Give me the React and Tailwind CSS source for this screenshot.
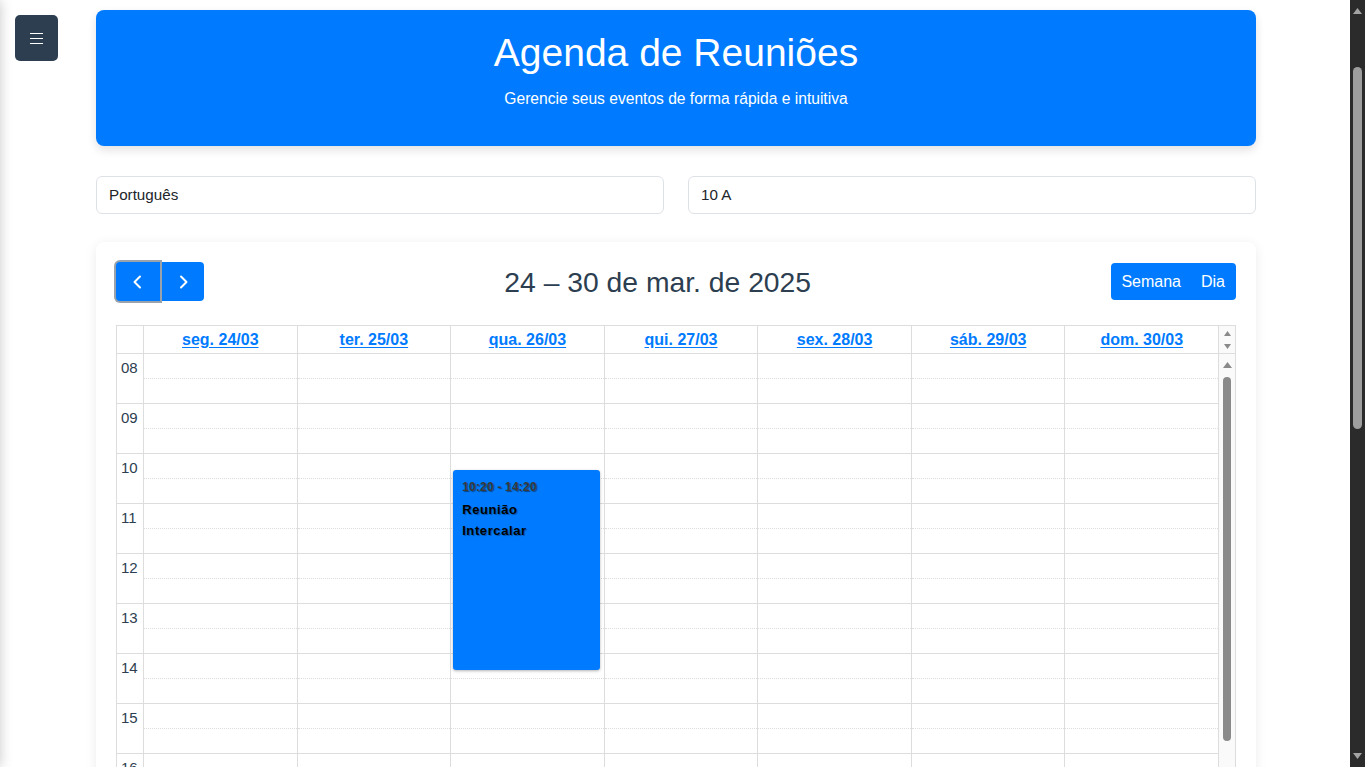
import React from "react";

const days = ["seg. 24/03", "ter. 25/03", "qua. 26/03", "qui. 27/03", "sex. 28/03", "sáb. 29/03", "dom. 30/03"];
const hours = ["08", "09", "10", "11", "12", "13", "14", "15", "16", "17", "18", "19"];

function Slots() {
  return (
    <>
      {hours.map((h) => (
        <div key={h}>
          <div className="h-[25px] border-b border-dotted border-[#dddddd]" />
          <div className="h-[25px] border-b border-[#dddddd]" />
        </div>
      ))}
    </>
  );
}

export default function App() {
  return (
    <div className="relative flex h-[767px] overflow-hidden bg-white font-['Liberation_Sans',Arial,sans-serif] text-[#212529]">
      {/* off-canvas sidebar shadow */}
      <div className="absolute left-[-300px] top-0 h-full w-[300px] bg-white shadow-[0_0_12px_rgba(0,0,0,0.22)]" />
      {/* hamburger */}
      <button className="absolute left-[15px] top-[15px] z-10 flex h-[46px] w-[43px] flex-col items-center justify-center gap-[4px] rounded-[5px] bg-[#2c3e50]">
        <span className="block h-[1px] w-[13px] bg-white" />
        <span className="block h-[1px] w-[13px] bg-white" />
        <span className="block h-[1px] w-[13px] bg-white" />
      </button>

      <main className="flex-1 overflow-hidden pl-[2px]">
        <div className="mx-auto w-[1160px] pt-[10px]">
          {/* header */}
          <header className="flex h-[136px] flex-col items-center rounded-[8px] bg-[#007bff] pt-[19px] text-white shadow-[0_4px_10px_rgba(0,0,0,0.12)]">
            <h1 className="text-[39px] leading-[47px]">Agenda de Reuniões</h1>
            <p className="mt-[13px] text-[15.6px] leading-[20px]">Gerencie seus eventos de forma rápida e intuitiva</p>
          </header>

          {/* inputs */}
          <div className="mt-[30px] flex gap-[24px]">
            <div className="flex h-[38px] flex-1 items-center rounded-[6px] border border-[#dee2e6] px-[12px] text-[15.2px] text-[#212529]">Português</div>
            <div className="flex h-[38px] flex-1 items-center rounded-[6px] border border-[#dee2e6] px-[12px] text-[15.2px] text-[#212529]">10 A</div>
          </div>

          {/* calendar card */}
          <section className="mt-[28px] rounded-[8px] bg-white px-[20px] pt-[20px] shadow-[0_2px_12px_rgba(0,0,0,0.08)]">
            {/* toolbar */}
            <div className="flex h-[39px] items-center justify-between">
              <div className="flex h-[39px]">
                <button className="relative z-[1] flex h-[39px] w-[44px] items-center justify-center rounded-l-[4px] bg-[#007bff] shadow-[0_0_0_2px_#9aa3ab]">
                  <svg width="14" height="16" viewBox="0 0 14 16" fill="none" stroke="white" strokeWidth="2" strokeLinecap="round" strokeLinejoin="round"><path d="M9 2.5 L3.5 8 L9 13.5" /></svg>
                </button>
                <button className="flex h-[39px] w-[44px] items-center justify-center rounded-r-[4px] border-l border-[#0062cc] bg-[#007bff]">
                  <svg width="14" height="16" viewBox="0 0 14 16" fill="none" stroke="white" strokeWidth="2" strokeLinecap="round" strokeLinejoin="round"><path d="M5 2.5 L10.5 8 L5 13.5" /></svg>
                </button>
              </div>
              <h2 className="text-[28.3px] leading-[34px] text-[#2c3e50]">24 – 30 de mar. de 2025</h2>
              <div className="flex h-[37px] overflow-hidden rounded-[4px] bg-[#007bff] text-[16px] text-white">
                <button className="px-[10px]">Semana</button>
                <button className="pl-[10px] pr-[11px]">Dia</button>
              </div>
            </div>

            {/* table */}
            <div className="mt-[24px] border border-[#dddddd]">
              {/* header row */}
              <div className="flex h-[28px] border-b border-[#dddddd]">
                <div className="w-[27px] border-r border-[#dddddd]" />
                {days.map((d) => (
                  <div key={d} className="flex flex-1 items-center justify-center border-r border-[#dddddd] last:border-r-0">
                    <a className="text-[16px] font-bold text-[#007bff] underline underline-offset-[2px]">{d}</a>
                  </div>
                ))}
                <div className="flex w-[16px] flex-col items-center justify-center gap-[8px] bg-[#fafafa]">
                  <svg width="7" height="5" viewBox="0 0 7 5"><path d="M0 5 L3.5 0 L7 5 Z" fill="#8a8a8a" /></svg>
                  <svg width="7" height="5" viewBox="0 0 7 5"><path d="M0 0 L3.5 5 L7 0 Z" fill="#8a8a8a" /></svg>
                </div>
              </div>
              {/* body */}
              <div className="flex h-[430px]">
                <div className="w-[27px] border-r border-[#dddddd]">
                  {hours.map((h) => (
                    <div key={h} className="h-[50px] border-b border-[#dddddd]">
                      <div className="pl-[4px] pt-[5px] text-[15px] leading-[18px] text-[#2c3e50]">{h}</div>
                    </div>
                  ))}
                </div>
                {days.map((d, i) => (
                  <div key={d} className="relative flex-1 border-r border-[#dddddd] last:border-r-0">
                    <Slots />
                    {i === 2 && (
                      <div className="absolute left-[2px] right-[4px] top-[116px] h-[200px] rounded-[3px] bg-[#007bff] px-[9px] pt-[10px] shadow-[0_1px_3px_rgba(0,0,0,0.3)]">
                        <div className="text-[12px] font-bold leading-[15px] tracking-[0.2px] text-[#3a3a3a] [text-shadow:1px_1px_1px_rgba(0,0,0,0.45)]">10:20 - 14:20</div>
                        <div className="mt-[4px] text-[13px] font-bold leading-[21px] tracking-[0.6px] text-black [text-shadow:1px_1px_1px_rgba(0,0,0,0.35)]">Reunião<br />Intercalar</div>
                      </div>
                    )}
                  </div>
                ))}
                <div className="flex w-[16px] flex-col items-center bg-[#fafafa] pt-[8px]">
                  <svg width="9" height="6" viewBox="0 0 9 6"><path d="M0 6 L4.5 0 L9 6 Z" fill="#8a8a8a" /></svg>
                  <div className="mt-[9px] h-[364px] w-[8px] rounded-[4px] bg-[#8a8a8a]" />
                </div>
              </div>
            </div>
          </section>
        </div>
      </main>

      {/* page scrollbar */}
      <div className="flex w-[15px] flex-col items-center bg-[#2b2b2b]">
        <svg className="mt-[8px]" width="9" height="6" viewBox="0 0 9 6"><path d="M0 6 L4.5 0 L9 6 Z" fill="#a3a3a3" /></svg>
        <div className="mt-[53px] h-[362px] w-[9px] rounded-[5px] bg-[#9e9e9e]" />
        <div className="flex-1" />
        <svg className="mb-[8px]" width="9" height="6" viewBox="0 0 9 6"><path d="M0 0 L4.5 6 L9 0 Z" fill="#a3a3a3" /></svg>
      </div>
    </div>
  );
}
